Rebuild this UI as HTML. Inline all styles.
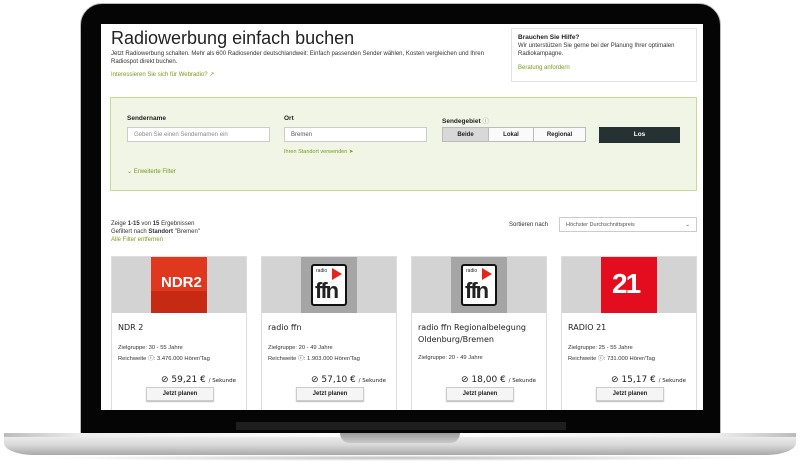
<!DOCTYPE html>
<html><head><meta charset="utf-8">
<style>
*{margin:0;padding:0;box-sizing:border-box}
body{width:800px;height:468px;background:#fff;position:relative;overflow:hidden;font-family:"Liberation Sans",sans-serif;color:#222}
.bez{position:absolute;left:80px;top:3px;width:641px;height:432px;background:#050505;border-radius:22px 22px 0 0;border:1px solid #bbb}
.scr{position:absolute;left:101px;top:24px;width:602px;height:386px;background:#fff;overflow:hidden}
.strip{position:absolute;left:236px;top:422px;width:330px;height:8px;background:#1e1e1e}
.base{position:absolute;left:4px;top:433px;width:792px;height:22px;background:linear-gradient(#f4f4f4,#d8d8d8 55%,#a9a9a9);border-radius:2px 2px 30px 30px/2px 2px 12px 12px}
.base:before{content:"";position:absolute;left:0;right:0;top:0;height:4px;background:linear-gradient(90deg,#bbb,#eee 10%,#fff 50%,#eee 90%,#bbb)}
.notch{position:absolute;left:340px;top:433px;width:120px;height:10px;background:linear-gradient(#9a9a9a,#c9c9c9);border-radius:0 0 10px 10px}
.shadow{position:absolute;left:40px;top:455px;width:720px;height:6px;background:radial-gradient(ellipse at center,rgba(0,0,0,.25),rgba(0,0,0,0) 70%)}
.a{position:absolute}
h1{position:absolute;left:10px;top:4px;font-size:18px;font-weight:normal;color:#222}
.s{font-size:6px;color:#333;line-height:8px}
.g{color:#7a9a1a}
.help{left:410px;top:4px;width:186px;height:54px;border:1px solid #e3e3e3;padding:5px 6px}
.filt{left:9px;top:73px;width:587px;height:94px;background:#f1f5e6;border:1px solid #c6da90}
.lbl{font-size:6.5px;font-weight:bold;color:#222}
.inp{height:15px;background:#fff;border:1px solid #ccc;font-size:6px;color:#888;padding:4px 6px}
.seg{display:flex;height:15px;border:1px solid #bbb;font-size:6px;font-weight:bold}
.seg div{display:flex;align-items:center;justify-content:center;border-left:1px solid #bbb;background:#fafafa}
.card{top:232px;width:136px;height:160px;border:1px solid #ddd;background:#fff}
.lg{height:56px;background:#d3d3d3;position:relative}
.sq{position:absolute;left:39px;top:0;width:56px;height:56px}
.nm{font-family:"DejaVu Sans",sans-serif;font-size:8px;margin:9px 0 7px 6px;color:#222;line-height:12px;min-height:14px}
.det{font-size:5.8px;margin-left:6px;line-height:11px;color:#333}
.pr{position:absolute;right:10px;top:118px;font-size:9px;font-family:"DejaVu Sans",sans-serif}
.pr small{font-size:5.5px}
.btn{position:absolute;left:34px;top:130px;width:68px;height:14px;border:1px solid #ccc;background:#f5f5f5;box-shadow:0 1px 1px #bbb;font-size:6px;font-weight:bold;text-align:center;line-height:12px}
.ffn{position:absolute;left:10px;top:7px;width:36px;height:42px;background:#fff;border:2px solid #111;border-radius:3px}
</style></head><body>
<div class="shadow"></div>
<div class="bez"></div>
<div class="strip"></div>
<div class="base"></div>
<div class="notch"></div>
<div class="scr">
<h1>Radiowerbung einfach buchen</h1>
<div class="a s" style="left:10px;top:26px;width:390px">Jetzt Radiowerbung schalten. Mehr als 600 Radiosender deutschlandweit: Einfach passenden Sender wählen, Kosten vergleichen und Ihren Radiospot direkt buchen.</div>
<div class="a s g" style="left:10px;top:47px">Interessieren Sie sich für Webradio? ↗</div>
<div class="a help s"><b style="font-size:6.5px;color:#222">Brauchen Sie Hilfe?</b><br>Wir unterstützen Sie gerne bei der Planung Ihrer optimalen Radiokampagne.<div class="g" style="margin-top:6px">Beratung anfordern</div></div>
<div class="a filt">
 <div class="a lbl" style="left:16px;top:17px">Sendername</div>
 <div class="a inp" style="left:16px;top:29px;width:143px">Geben Sie einen Sendernamen ein</div>
 <div class="a lbl" style="left:173px;top:17px">Ort</div>
 <div class="a inp" style="left:173px;top:29px;width:143px;color:#555">Bremen</div>
 <div class="a s g" style="left:173px;top:50px;font-size:5.5px">Ihren Standort verwenden ➤</div>
 <div class="a lbl" style="left:331px;top:17px">Sendegebiet <span style="font-weight:normal;color:#999">ⓘ</span></div>
 <div class="a seg" style="left:331px;top:29px;width:144px"><div style="width:45px;background:#d8d8d8;border:none">Beide</div><div style="width:45px">Lokal</div><div style="flex:1">Regional</div></div>
 <div class="a" style="left:488px;top:29px;width:81px;height:16px;background:#263134;color:#fff;font-size:6.5px;font-weight:bold;text-align:center;line-height:16px">Los</div>
 <div class="a s g" style="left:16px;top:70px">⌄ Erweiterte Filter</div>
</div>
<div class="a s" style="left:10px;top:196px">Zeige <b>1-15</b> von <b>15</b> Ergebnissen<br>Gefiltert nach <b>Standort</b> "Bremen"<br><span class="g">Alle Filter entfernen</span></div>
<div class="a s" style="left:408px;top:197px">Sortieren nach</div>
<div class="a inp" style="left:458px;top:193px;width:138px;height:15px;color:#555;font-size:5.5px">Höchster Durchschnittspreis<span style="float:right">⌄</span></div>

<div class="a card" style="left:10px"><div class="lg"><div class="sq" style="background:#e0381f"><div style="position:absolute;left:0;right:0;bottom:0;height:22px;background:#c72a12"></div><div style="position:absolute;left:10px;top:17px;color:#fff;font-weight:bold;font-size:15px;letter-spacing:0">NDR2</div></div></div>
<div class="nm">NDR 2</div><div class="det">Zielgruppe: 30 - 55 Jahre<br>Reichweite ⓘ: 3.476.000 Hörer/Tag</div><div class="pr">⊘ 59,21 € <small>/ Sekunde</small></div><div class="btn">Jetzt planen</div></div>

<div class="a card" style="left:160px"><div class="lg"><div class="sq" style="background:#a5a5a5"><div class="ffn"><div style="position:absolute;left:3px;top:2px;font-size:5px">radio</div><div style="position:absolute;right:3px;top:2px;width:0;height:0;border-left:10px solid #e5241b;border-top:6px solid transparent;border-bottom:6px solid transparent"></div><div style="position:absolute;left:2px;top:12px;font-size:22px;font-weight:bold;letter-spacing:-2px">ffn</div></div></div></div>
<div class="nm">radio ffn</div><div class="det">Zielgruppe: 20 - 49 Jahre<br>Reichweite ⓘ: 1.903.000 Hörer/Tag</div><div class="pr">⊘ 57,10 € <small>/ Sekunde</small></div><div class="btn">Jetzt planen</div></div>

<div class="a card" style="left:310px"><div class="lg"><div class="sq" style="background:#a5a5a5"><div class="ffn"><div style="position:absolute;left:3px;top:2px;font-size:5px">radio</div><div style="position:absolute;right:3px;top:2px;width:0;height:0;border-left:10px solid #e5241b;border-top:6px solid transparent;border-bottom:6px solid transparent"></div><div style="position:absolute;left:2px;top:12px;font-size:22px;font-weight:bold;letter-spacing:-2px">ffn</div></div></div></div>
<div class="nm">radio ffn Regionalbelegung Oldenburg/Bremen</div><div class="det">Zielgruppe: 20 - 49 Jahre</div><div class="pr">⊘ 18,00 € <small>/ Sekunde</small></div><div class="btn">Jetzt planen</div></div>

<div class="a card" style="left:460px"><div class="lg"><div class="sq" style="background:#e30d1f"><div style="position:absolute;left:11px;top:10px;color:#fff;font-weight:bold;font-size:28px;letter-spacing:-2px;line-height:34px">21</div></div></div>
<div class="nm">RADIO 21</div><div class="det">Zielgruppe: 25 - 55 Jahre<br>Reichweite ⓘ: 731.000 Hörer/Tag</div><div class="pr">⊘ 15,17 € <small>/ Sekunde</small></div><div class="btn">Jetzt planen</div></div>
</div>
</body></html>
